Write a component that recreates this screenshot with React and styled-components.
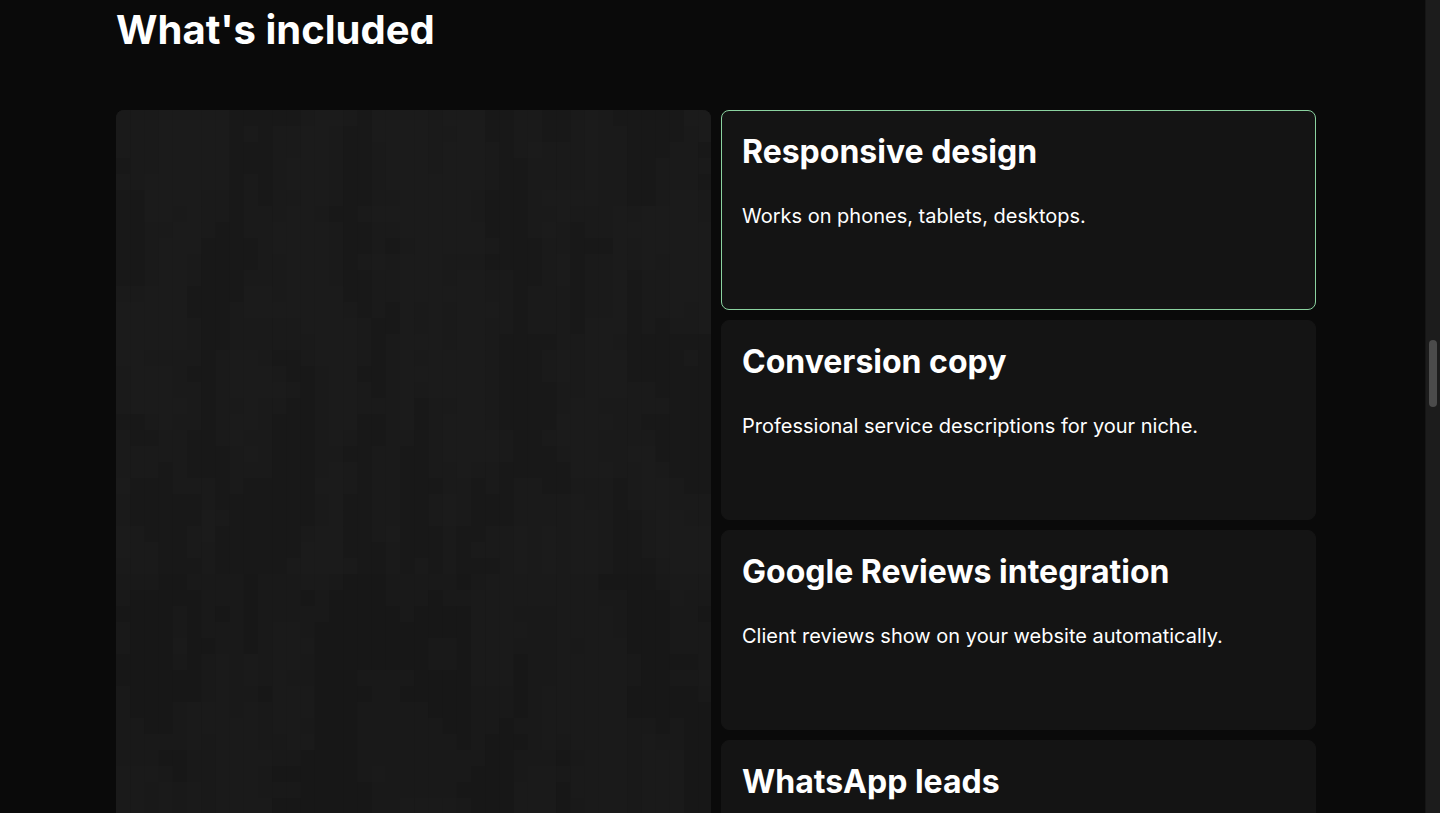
import React, { useMemo } from 'react'
import styled, { createGlobalStyle } from 'styled-components';

const GlobalStyle = createGlobalStyle`
    html, body {
        margin: 0;
        padding: 0;
        height: 100%;
        overflow: hidden;
        background: #0a0a0a;
    }

    body {
        font-family: Inter, "Noto Sans", "Liberation Sans", sans-serif;
        color: #ffffff;
    }

    #root {
        height: 100%;
    }
`;

const Page = styled.div`
    display: flex;
    height: 100vh;
    background: #0a0a0a;
`;

const Main = styled.main`
    flex: 1;
    overflow: hidden;
`;

const Section = styled.section`
    width: 1200px;
    margin-left: 116px;
    padding-top: 6px;
`;

const Heading = styled.h2`
    margin: 0 0 56px;
    font-size: 40px;
    line-height: 48px;
    font-weight: 700;
`;

const Grid = styled.div`
    display: grid;
    grid-template-columns: 1fr 1fr;
    gap: 10px;
`;

const Visual = styled.div`
    border-radius: 8px;
    overflow: hidden;
    background: #1a1a1a;
    min-height: 830px;

    & > svg {
        display: block;
        width: 100%;
        height: 100%;
    }
`;

const Cards = styled.div`
    display: flex;
    flex-direction: column;
    gap: 10px;
`;

const Card = styled.div`
    box-sizing: border-box;
    height: 200px;
    padding: 20px;
    border-radius: 8px;
    background: #141414;
    border: 1px solid ${(p) => (p.active ? '#8bd3a0' : '#141414')};
`;

const CardTitle = styled.h3`
    margin: 0 0 28px;
    font-size: 32px;
    line-height: 1.3;
    font-weight: 700;
`;

const CardText = styled.p`
    margin: 0;
    font-size: 20px;
    line-height: 1.5;
    color: #ffffff;
`;

const Scrollbar = styled.div`
    width: 15px;
    flex: none;
    background: #1c1c1c;
    border-left: 1px solid #151515;
    box-sizing: border-box;
    padding-top: 340px;
    display: flex;
    justify-content: center;
`;

const Thumb = styled.div`
    width: 8px;
    height: 67px;
    border-radius: 4px;
    background: #4b4b4b;
`;

const features = [
  { title: 'Responsive design', text: 'Works on phones, tablets, desktops.' },
  { title: 'Conversion copy', text: 'Professional service descriptions for your niche.' },
  { title: 'Google Reviews integration', text: 'Client reviews show on your website automatically.' },
  { title: 'WhatsApp leads', text: 'Visitors message you in one tap.' },
];

// faint blocky backdrop, like the pixelated image in the tile
const PixelNoise = () => {
  const cells = useMemo(() => {
    const cols = 42;
    const rows = 52;
    let seed = 11;
    const rand = () => {
      seed = (seed * 16807) % 2147483647;
      return seed / 2147483647;
    };
    const base = [];
    for (let r = 0; r < rows; r++) {
      base.push([]);
      for (let c = 0; c < cols; c++) base[r].push(rand());
    }
    const out = [];
    for (let r = 0; r < rows; r++) {
      for (let c = 0; c < cols; c++) {
        let sum = 0;
        let n = 0;
        for (let dr = -3; dr <= 3; dr++) {
          for (let dc = -1; dc <= 1; dc++) {
            const rr = r + dr;
            const cc = c + dc;
            if (rr >= 0 && rr < rows && cc >= 0 && cc < cols) {
              sum += base[rr][cc];
              n++;
            }
          }
        }
        const v = sum / n;
        const level = v > 0.53 ? 27 : v > 0.47 ? 26 : 24;
        const fade = r > 28 ? -1 : 0;
        out.push({ r, c, g: level + fade });
      }
    }
    return out;
  }, []);

  return (
    <svg viewBox="0 0 595 832" preserveAspectRatio="none">
      {cells.map(({ r, c, g }) => (
        <rect
          key={`${r}-${c}`}
          x={c * 14.2}
          y={r * 16}
          width="14.8"
          height="16.6"
          fill={`rgb(${g},${g},${g})`}
        />
      ))}
    </svg>
  );
};

const App = () => {
  return (
    <>
      <GlobalStyle />
      <Page>
        <Main>
          <Section>
            <Heading>What's included</Heading>
            <Grid>
              <Visual>
                <PixelNoise />
              </Visual>
              <Cards>
                {features.map((f, i) => (
                  <Card key={f.title} active={i === 0}>
                    <CardTitle>{f.title}</CardTitle>
                    <CardText>{f.text}</CardText>
                  </Card>
                ))}
              </Cards>
            </Grid>
          </Section>
        </Main>
        <Scrollbar>
          <Thumb />
        </Scrollbar>
      </Page>
    </>
  )
}

export default App
